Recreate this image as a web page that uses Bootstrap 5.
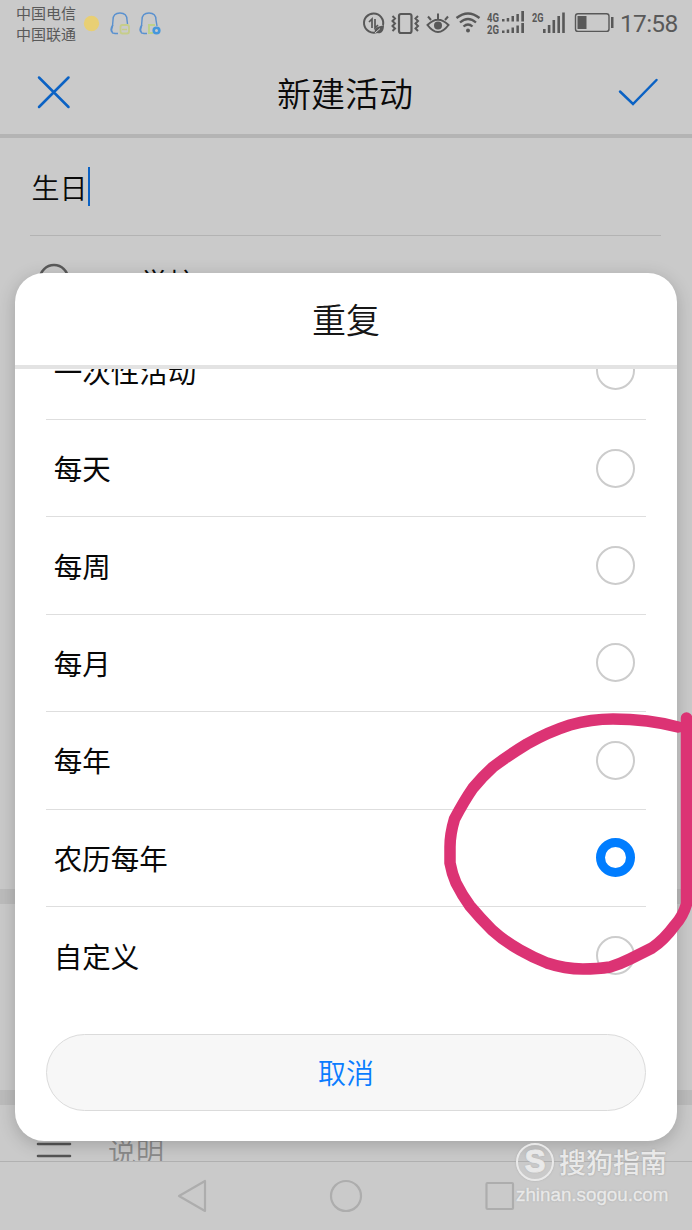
<!DOCTYPE html>
<html lang="zh-CN">
<head>
<meta charset="utf-8">
<meta name="viewport" content="width=device-width, initial-scale=1">
<title>新建活动</title>
<link href="https://cdn.jsdelivr.net/npm/bootstrap@5.3.0/dist/css/bootstrap.min.css" rel="stylesheet">
<style>
  body { font-family: "Noto Sans", "Noto Sans CJK SC", sans-serif; background: #cacaca; color: #0a0a0a; }
  .screen { width: 692px; height: 1230px; font-family: "Noto Sans CJK SC", sans-serif; }
  .status { height: 48px; color: #595959; padding: 0 15px 0 16px; }
  .carrier { font-size: 15px; line-height: 21px; padding-top: 2px; width: 67px; }
  .clock { font: 24.5px/48px Roboto, sans-serif; width: 57px; letter-spacing: -.7px; margin-left: 5px; }
  .app-head { height: 90px; border-bottom: 4px solid #b4b4b4; padding: 0 33px 0 36px; }
  .app-head h1 { font-size: 34px; line-height: 50px; padding-top: 3px; padding-left: 1px; font-weight: 350; }
  .name-field { height: 98px; margin: 0 31px 0 30px; border-bottom: 1px solid #b3b3b3; font-size: 28px; font-weight: 350; padding-left: 1.5px; }
  .caret { width: 2px; height: 39px; background: #0b62c4; }
  .place { height: 653px; padding: 27px 0 0 37px; font-size: 28px; line-height: 38px; }
  .place span { padding-left: 67px; }
  .gap-band { height: 15px; background: #bcbcbc; }
  .blank-block { height: 186px; }
  .note { height: 56px; padding: 24px 0 0 36px; font-size: 28px; line-height: 45px; color: #8b8b8b; font-weight: 350; }
  .note span { padding-left: 36px; }
  .sysnav { height: 70px; border-top: 1px solid #b1b1b1; background: #cacaca; padding: 0 177px 2px 177px; }
  .sheet { left: 15px; top: 273px; width: 662px; height: 868px; border-radius: 29px; background: #fff; box-shadow: 0 4px 18px rgba(0,0,0,.2); }
  .sheet-head { height: 96px; border-bottom: 4px solid #e3e3e3; font-size: 34px; font-weight: 350; color: #161616; padding-bottom: 1px; }
  .options { height: 635px; padding: 0 31px; }
  .options ul { margin-top: -46.4px; }
  .option { height: 97.4px; border-bottom: 1px solid #dedede; padding: 0 11.5px 0 7.7px; font-size: 28.5px; color: #080808; }
  .option span { padding-top: 1px; }
  .option:last-child { border: 0; }
  .form-check-input.dot { width: 39px; height: 39px; margin: 0; border: 2px solid #cccccc; background: #fff; }
  .form-check-input.dot:checked { border: 9.5px solid #007dff; background: #fff; }
  .cancel { width: 600px; height: 77px; margin: 30px auto 0; border: 1px solid #dbdbdb; border-radius: 39px; background: #f7f7f7; color: #0a7cff; font-size: 28px; font-weight: 350; padding-bottom: 8px; }
  .scribble { left: 0; top: 0; pointer-events: none; }
  .brand { left: 516px; top: 1141px; width: 176px; color: #e9e9e9; text-shadow: 0 0 2px #999; }
  .brand-s { width: 38px; height: 38px; border: 2.5px solid #e9e9e9; border-radius: 50%; box-shadow: 0 0 2px #aaa; font: bold 31px/33px "Liberation Sans", sans-serif; text-align: center; -webkit-text-stroke: 1px #e9e9e9; }
  .brand-name { font-size: 27px; line-height: 42px; font-weight: 500; margin-left: 5px; }
  .brand-url { font: 18.8px/24px "Liberation Sans", sans-serif; -webkit-text-stroke: .4px #e9e9e9; }
</style>
</head>
<body>
<div class="screen position-relative overflow-hidden">
  <div class="status d-flex">
    <div class="carrier text-nowrap">中国电信<br>中国联通</div>
    <svg width="90" height="48" viewBox="83 0 90 48" fill="none">
      <circle cx="91.5" cy="23.5" r="7.7" fill="#e8cf74"/>
      <g stroke="#5a91cf" stroke-width="1.4">
        <path d="M118 33.5H115L112.5 33L111.5 30L112.5 26L113 20C113 15 116 13 120 13C125 13 127 16 127 20L127.5 24"/>
        <path d="M113 25C110.500 28 110.700 31 112 32"/>
        <path d="M147 33.500H144L141.500 33L140.500 30L141.500 26L142 20C142 15 145 13 149 13C154 13 156 16 156 20L157 26"/>
        <path d="M142 25C139.500 28 139.700 31 141 32"/>
      </g>
      <rect x="120.500" y="25" width="8.500" height="8.500" rx="2" stroke="#c6cd8a" stroke-width="1.800"/><path d="M122 29.500H127" stroke="#c6cd8a" stroke-width="1.500"/>
      <path d="M155 25H149V33H153" stroke="#bfd189" stroke-width="2"/>
      <circle cx="156.500" cy="30.500" r="2.800" stroke="#4597dc" stroke-width="2.600"/>
    </svg>
    <svg class="ms-auto" width="254" height="48" viewBox="360 0 254 48" fill="none" stroke="#585858" stroke-width="2">
      <path d="M376 32A9.600 9.600 0 1 1 382 25"/>
      <path d="M368 22L371 19V28M374 19V28L377 25" stroke-width="1.700"/>
      <path d="M374 32C373 27 377 27 383 25C383 32 380 34 376 33Z" fill="#585858" stroke="none"/><path d="M374 33L379 28.500" stroke="#cacaca" stroke-width="1"/>
      <rect x="398" y="14" width="12.500" height="19" rx="2" stroke-width="2.200"/>
      <path d="M391.500 16L394 18.500L391.500 21L394 23.500L391.500 26L394 28.500L391.500 31M417 16L414.500 18.500L417 21L414.500 23.500L417 26L414.500 28.500L417 31"/>
      <path d="M426.500 25Q437 14.500 447.500 25Q437 39 426.500 25ZM437 19V13.500M430 20L427 16.500M444 20L447 16.500" stroke-width="2"/>
      <circle cx="437" cy="25.500" r="4" fill="#585858" stroke="none"/>
      <path d="M455.500 18Q467 9 478.500 18M459 22.500Q467 15.500 475 22.500M462.500 26.500Q467 22.500 471.500 26.500" stroke-width="2.300"/>
      <circle cx="467" cy="30.500" r="2" fill="#585858" stroke="none"/>
      <g fill="#585858" stroke="none" font-family="Roboto, sans-serif" font-weight="700">
        <text x="486" y="21.500" font-size="12" textLength="12" lengthAdjust="spacingAndGlyphs">4G</text>
        <text x="486" y="33.500" font-size="12" textLength="12" lengthAdjust="spacingAndGlyphs">2G</text>
        <text x="531" y="22" font-size="12.500" textLength="11.500" lengthAdjust="spacingAndGlyphs">2G</text>
        <path d="M501 19h2.500v2.500h-2.500zM505.700 18h2.500v3.500h-2.500zM510.500 16h2.500v5.500h-2.500zM515.400 14h2.500v7.500h-2.500zM520.300 11h2.700v10.500h-2.700z"/>
        <path d="M501 30.500h2.500v2.500h-2.500zM505.700 29.500h2.500v3.500h-2.500zM510.500 27.500h2.500v5.500h-2.500zM515.400 25.500h2.500v7.500h-2.500zM520.300 23h2.700v10h-2.700z"/>
        <path d="M542 29h2.600v4h-2.600zM546.800 25h2.600v8h-2.600zM551.500 20h2.600v13h-2.600zM556.400 16h2.600v17h-2.600zM561.200 12.500h2.600v20.500h-2.600z"/>
        <rect x="576.500" y="16" width="9" height="13"/><rect x="610" y="17" width="2.500" height="11"/>
      </g>
      <rect x="574.500" y="13.800" width="33.500" height="17.600" rx="2.500" stroke-width="1.400"/>
    </svg>
    <span class="clock">17:58</span>
  </div>

  <header class="app-head d-flex align-items-center justify-content-between">
    <svg width="36" height="36" viewBox="0 0 36 36" fill="none" stroke="#0b62c4" stroke-width="2.500" stroke-linecap="round"><path d="M3 4.500L32.500 34M32.500 4.500L3 34"/></svg>
    <h1 class="m-0">新建活动</h1>
    <svg width="42" height="36" viewBox="0 0 42 36" fill="none" stroke="#0b62c4" stroke-width="2.500" stroke-linecap="round"><path d="M3 18.500L16 31L39.500 7"/></svg>
  </header>

  <div class="name-field d-flex align-items-center"><span>生日</span><div class="caret"></div></div>
  <div class="place d-flex align-items-start">
    <svg width="36" height="42" viewBox="0 0 36 42" fill="none" stroke="#5a5a5a" stroke-width="2.500"><path d="M17 40C8 28 3 23 3 16A14 14 0 0 1 31 16C31 23 26 28 17 40Z"/></svg>
    <span>学校</span>
  </div>
  <div class="gap-band"></div>
  <div class="blank-block"></div>
  <div class="gap-band"></div>
  <div class="note d-flex align-items-start">
    <svg class="flex-shrink-0" width="36" height="36" viewBox="0 0 36 36" stroke="#555" stroke-width="2.600" stroke-linecap="round"><path d="M2 15H34M2 27H34"/></svg>
    <span>说明</span>
  </div>
  <nav class="sysnav position-relative d-flex align-items-center justify-content-between">
    <svg width="30" height="34" viewBox="0 0 30 34" fill="none" stroke="#adadad" stroke-width="2.200" stroke-linejoin="round"><path d="M2 17L28 2V32Z"/></svg>
    <svg width="34" height="34" viewBox="0 0 34 34" fill="none" stroke="#adadad" stroke-width="2.200"><circle cx="17" cy="17" r="15"/></svg>
    <svg width="30" height="30" viewBox="0 0 30 30" fill="none" stroke="#adadad" stroke-width="2.200"><rect x="1.500" y="2" width="26.500" height="26" rx="1"/></svg>
  </nav>

  <section class="sheet position-absolute">
    <div class="sheet-head d-flex align-items-center justify-content-center">重复</div>
    <div class="options overflow-hidden">
      <ul class="list-unstyled mb-0">
        <li class="option d-flex align-items-center justify-content-between"><span>一次性活动</span><input class="form-check-input dot" type="radio" name="repeat"></li>
        <li class="option d-flex align-items-center justify-content-between"><span>每天</span><input class="form-check-input dot" type="radio" name="repeat"></li>
        <li class="option d-flex align-items-center justify-content-between"><span>每周</span><input class="form-check-input dot" type="radio" name="repeat"></li>
        <li class="option d-flex align-items-center justify-content-between"><span>每月</span><input class="form-check-input dot" type="radio" name="repeat"></li>
        <li class="option d-flex align-items-center justify-content-between"><span>每年</span><input class="form-check-input dot" type="radio" name="repeat"></li>
        <li class="option d-flex align-items-center justify-content-between"><span>农历每年</span><input class="form-check-input dot" type="radio" name="repeat" checked></li>
        <li class="option d-flex align-items-center justify-content-between"><span>自定义</span><input class="form-check-input dot" type="radio" name="repeat"></li>
      </ul>
    </div>
    <button class="btn cancel d-flex align-items-center justify-content-center" type="button">取消</button>
  </section>

  <svg class="scribble position-absolute" width="692" height="1230" viewBox="0 0 692 1230" fill="none" stroke="#dc3374" stroke-width="11.500" stroke-linecap="round" stroke-linejoin="round">
    <path d="M678 727Q663 723 647 721Q630 719 613 719Q591 719 570 725Q548 732 527 744Q509 755 493 767Q482 777 473 788Q464 801 454.500 819Q450 834 450 847V863Q452 874 456 883Q462 895 470 906Q480 918 492 930Q504 941 520 950Q534 958 547 963Q565 969 583 969Q598 969 610 967Q620 964 630 959L652 948Q664 940 675 925Q683 916 686.500 904V718"/>
  </svg>

  <div class="brand position-absolute text-nowrap">
    <div class="d-flex align-items-center"><div class="brand-s">S</div><span class="brand-name">搜狗指南</span></div>
    <div class="brand-url">zhinan.sogou.com</div>
  </div>
</div>
<script src="https://cdn.jsdelivr.net/npm/bootstrap@5.3.0/dist/js/bootstrap.bundle.min.js"></script>
</body>
</html>
